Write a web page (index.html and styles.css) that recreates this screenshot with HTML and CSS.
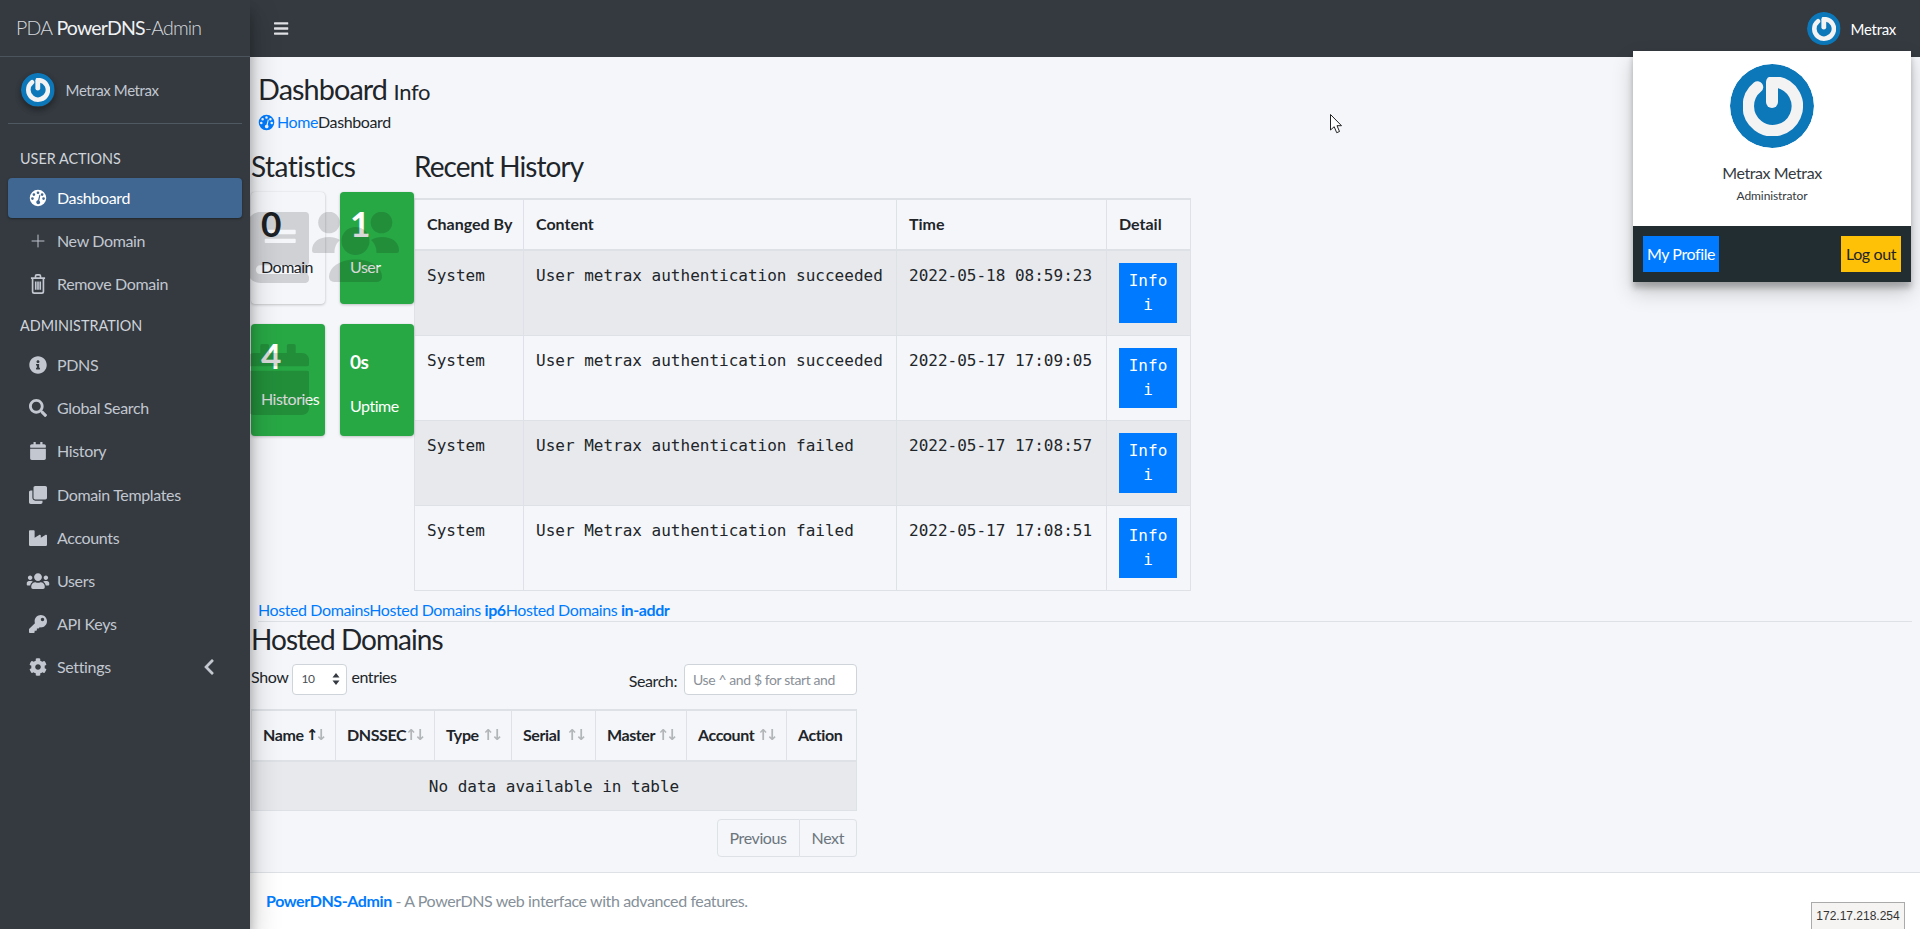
FILE: index.html
```html
<!DOCTYPE html>
<html lang="en">
<head>
<meta charset="utf-8">
<title>Dashboard - PowerDNS-Admin</title>
<link rel="stylesheet" href="styles.css">
</head>
<body>
<svg class="sprite" aria-hidden="true">
  <defs>
    <filter id="soft" x="-10%" y="-10%" width="120%" height="120%"><feGaussianBlur stdDeviation="0.6"/></filter>
    <symbol id="avatar" viewBox="0 0 84 84">
      <circle cx="42" cy="42" r="42" fill="#0c77b9"/>
      <g filter="url(#soft)" fill="none" stroke="#f3f3f4" stroke-linecap="round">
        <path d="M27.500 23A24.500 24.500 0 1 0 47 18" stroke-width="11.500"/>
        <path d="M42 18V38" stroke-width="12"/>
      </g>
    </symbol>
    <symbol id="gauge" viewBox="0 0 24 24">
      <path fill-rule="evenodd" d="M12 1a11 11 0 1 1 0 22a11 11 0 0 1 0-22zM12 3.200a1.800 1.800 0 1 0 0 3.600a1.800 1.800 0 0 0 0-3.600zM6.500 5.600a1.800 1.800 0 1 0 0 3.600a1.800 1.800 0 0 0 0-3.600zM17.500 5.600a1.800 1.800 0 1 0 0 3.600a1.800 1.800 0 0 0 0-3.600zM4.600 11a1.800 1.800 0 1 0 0 3.600a1.800 1.800 0 0 0 0-3.600zM19.400 11a1.800 1.800 0 1 0 0 3.600a1.800 1.800 0 0 0 0-3.600zM13.900 7.600L12 15.100a2.600 2.600 0 1 0 1.700.4L15.200 8z"/>
    </symbol>
    <symbol id="trash" viewBox="0 0 20 24">
      <path fill="none" stroke="currentColor" stroke-width="2" d="M1.500 5h17M3.500 5v16a2 2 0 0 0 2 2h9a2 2 0 0 0 2-2V5M7 5V2.500a1.500 1.500 0 0 1 1.500-1.500h3A1.500 1.500 0 0 1 13 2.500V5M7.300 9v10M10 9v10M12.700 9v10"/>
    </symbol>
    <symbol id="plus" viewBox="0 0 24 24"><path fill="none" stroke="currentColor" stroke-width="1.300" d="M12 3.500v17M3.500 12h17"/></symbol>
    <symbol id="info" viewBox="0 0 512 512"><path d="M256 8C119.043 8 8 119.083 8 256c0 136.997 111.043 248 248 248s248-111.003 248-248C504 119.083 392.957 8 256 8zm0 110c23.196 0 42 18.804 42 42s-18.804 42-42 42-42-18.804-42-42 18.804-42 42-42zm56 254c0 6.627-5.373 12-12 12h-88c-6.627 0-12-5.373-12-12v-24c0-6.627 5.373-12 12-12h12v-64h-12c-6.627 0-12-5.373-12-12v-24c0-6.627 5.373-12 12-12h64c6.627 0 12 5.373 12 12v100h12c6.627 0 12 5.373 12 12v24z"/></symbol>
    <symbol id="search" viewBox="0 0 512 512"><path d="M505 442.700L405.300 343c-4.500-4.500-10.600-7-17-7H372c27.600-35.300 44-79.700 44-128C416 93.100 322.900 0 208 0S0 93.100 0 208s93.100 208 208 208c48.300 0 92.700-16.400 128-44v16.300c0 6.400 2.500 12.500 7 17l99.700 99.700c9.400 9.400 24.600 9.400 33.900 0l28.300-28.300c9.400-9.400 9.400-24.600.1-34zM208 336c-70.700 0-128-57.200-128-128 0-70.700 57.200-128 128-128 70.700 0 128 57.200 128 128 0 70.700-57.200 128-128 128z"/></symbol>
    <symbol id="calendar" viewBox="0 0 448 512"><path d="M12 192h424c6.600 0 12 5.400 12 12v260c0 26.500-21.500 48-48 48H48c-26.500 0-48-21.500-48-48V204c0-6.600 5.400-12 12-12zm436-44v-36c0-26.500-21.500-48-48-48h-48V12c0-6.600-5.400-12-12-12h-40c-6.600 0-12 5.400-12 12v52H160V12c0-6.600-5.400-12-12-12h-40c-6.600 0-12 5.400-12 12v52H48C21.500 64 0 85.500 0 112v36c0 6.600 5.400 12 12 12h424c6.600 0 12-5.400 12-12z"/></symbol>
    <symbol id="clone" viewBox="0 0 512 512"><path d="M464 0c26.510 0 48 21.490 48 48v288c0 26.510-21.490 48-48 48H176c-26.510 0-48-21.490-48-48V48c0-26.510 21.490-48 48-48h288M176 416c-44.112 0-80-35.888-80-80V128H48c-26.510 0-48 21.490-48 48v288c0 26.510 21.490 48 48 48h288c26.510 0 48-21.490 48-48v-48H176z"/></symbol>
    <symbol id="industry" viewBox="0 0 512 512"><path d="M475.115 163.781L336 252.309v-68.280c0-18.916-20.931-30.399-36.885-20.248L160 252.309V56c0-13.255-10.745-24-24-24H24C10.745 32 0 42.745 0 56v400c0 13.255 10.745 24 24 24h464c13.255 0 24-10.745 24-24V184.029c0-18.917-20.931-30.399-36.885-20.248z"/></symbol>
    <symbol id="users" viewBox="0 0 640 512"><path d="M96 224c35.300 0 64-28.700 64-64s-28.700-64-64-64-64 28.700-64 64 28.700 64 64 64zm448 0c35.300 0 64-28.700 64-64s-28.700-64-64-64-64 28.700-64 64 28.700 64 64 64zm32 32h-64c-17.600 0-33.500 7.100-45.100 18.600 40.300 22.100 68.900 62 75.100 109.400h66c17.700 0 32-14.300 32-32v-32c0-35.300-28.700-64-64-64zm-256 0c61.900 0 112-50.100 112-112S381.900 32 320 32 208 82.100 208 144s50.100 112 112 112zm76.800 32h-8.300c-20.800 10-43.900 16-68.500 16s-47.600-6-68.500-16h-8.300C179.600 288 128 339.600 128 403.200V432c0 26.500 21.500 48 48 48h288c26.500 0 48-21.500 48-48v-28.800c0-63.600-51.600-115.200-115.200-115.200zm-223.700-13.400C161.500 263.100 145.600 256 128 256H64c-35.300 0-64 28.700-64 64v32c0 17.700 14.300 32 32 32h65.900c6.300-47.400 34.900-87.300 75.200-109.400z"/></symbol>
    <symbol id="key" viewBox="0 0 512 512"><path d="M512 176.001C512 273.203 433.202 352 336 352c-11.220 0-22.190-1.062-32.827-3.069l-24.012 27.014A23.999 23.999 0 0 1 261.223 384H224v40c0 13.255-10.745 24-24 24h-40v40c0 13.255-10.745 24-24 24H24c-13.255 0-24-10.745-24-24v-78.059c0-6.365 2.529-12.470 7.029-16.971l161.802-161.802C163.108 213.814 160 195.271 160 176 160 78.798 238.797.001 335.999 0 433.488-.001 512 78.511 512 176.001zM336 128c0 26.510 21.490 48 48 48s48-21.490 48-48-21.490-48-48-48-48 21.490-48 48z"/></symbol>
    <symbol id="cog" viewBox="0 0 512 512"><path d="M487.400 315.700l-42.600-24.600c4.300-23.200 4.300-47 0-70.200l42.600-24.600c4.900-2.800 7.100-8.600 5.500-14-11.100-35.600-30-67.800-54.700-94.600-3.800-4.100-10-5.100-14.800-2.300L380.800 110c-17.900-15.400-38.500-27.300-60.800-35.100V25.800c0-5.600-3.900-10.500-9.400-11.700-36.700-8.200-74.300-7.800-109.200 0-5.500 1.200-9.400 6.100-9.400 11.700V75c-22.200 7.900-42.800 19.800-60.800 35.100L88.700 85.500c-4.900-2.800-11-1.900-14.800 2.300-24.700 26.700-43.600 58.900-54.700 94.600-1.700 5.400.6 11.200 5.500 14L67.300 221c-4.300 23.200-4.300 47 0 70.200l-42.600 24.600c-4.900 2.800-7.100 8.600-5.500 14 11.100 35.600 30 67.800 54.700 94.600 3.800 4.100 10 5.100 14.800 2.300l42.600-24.600c17.900 15.400 38.500 27.300 60.800 35.100v49.200c0 5.600 3.900 10.500 9.400 11.700 36.700 8.200 74.300 7.800 109.200 0 5.500-1.200 9.400-6.100 9.400-11.700v-49.200c22.200-7.900 42.800-19.800 60.800-35.100l42.600 24.600c4.900 2.800 11 1.900 14.800-2.300 24.700-26.700 43.600-58.900 54.700-94.600 1.500-5.500-.7-11.300-5.600-14.100zM256 336c-44.100 0-80-35.900-80-80s35.900-80 80-80 80 35.900 80 80-35.900 80-80 80z"/></symbol>
    <symbol id="chevron" viewBox="0 0 320 512"><path d="M34.520 239.030L228.870 44.690c9.370-9.370 24.570-9.370 33.940 0l22.670 22.670c9.360 9.360 9.370 24.520.04 33.900L131.490 256l154.020 154.750c9.340 9.380 9.320 24.540-.04 33.900l-22.670 22.670c-9.370 9.370-24.570 9.370-33.940 0L34.520 272.970c-9.370-9.370-9.370-24.570 0-33.940z"/></symbol>
    <symbol id="bars" viewBox="0 0 448 512"><path d="M16 132h416c8.837 0 16-7.163 16-16V76c0-8.837-7.163-16-16-16H16C7.163 60 0 67.163 0 76v40c0 8.837 7.163 16 16 16zm0 160h416c8.837 0 16-7.163 16-16v-40c0-8.837-7.163-16-16-16H16c-8.837 0-16 7.163-16 16v40c0 8.837 7.163 16 16 16zm0 160h416c8.837 0 16-7.163 16-16v-40c0-8.837-7.163-16-16-16H16c-8.837 0-16 7.163-16 16v40c0 8.837 7.163 16 16 16z"/></symbol>
    <symbol id="book" viewBox="0 0 448 512"><path d="M448 360V24c0-13.300-10.700-24-24-24H96C43 0 0 43 0 96v320c0 53 43 96 96 96h328c13.300 0 24-10.700 24-24v-16c0-7.500-3.500-14.300-8.900-18.700-4.200-15.400-4.200-59.300 0-74.700 5.400-4.300 8.900-11.100 8.900-18.600zM128 134c0-3.300 2.700-6 6-6h212c3.300 0 6 2.700 6 6v20c0 3.300-2.700 6-6 6H134c-3.300 0-6-2.700-6-6v-20zm0 64c0-3.300 2.700-6 6-6h212c3.300 0 6 2.700 6 6v20c0 3.300-2.700 6-6 6H134c-3.300 0-6-2.700-6-6v-20zm253.400 250H96c-17.700 0-32-14.300-32-32 0-17.600 14.400-32 32-32h285.400c-1.900 17.100-1.900 46.900 0 64z"/></symbol>
    <symbol id="group" viewBox="0 0 87 70">
      <circle cx="17" cy="10.500" r="10.800"/><circle cx="69.500" cy="10.500" r="10.800"/><circle cx="43.500" cy="29" r="14"/>
      <path d="M0 38.500C0 30 7 25 17 25c4 0 8 1 11 3-3.500 3-5.500 7-5.500 13H2.500A2.500 2.500 0 0 1 0 38.500z"/>
      <path d="M87 38.500C87 30 80 25 70 25c-4 0-8 1-11 3 3.500 3 5.500 7 5.500 13h20A2.500 2.500 0 0 0 87 38.500z"/>
      <path d="M17 65C17 55 28 47.500 43.500 47.500S70 55 70 65a5 5 0 0 1-5 5H22a5 5 0 0 1-5-5z"/>
    </symbol>
  </defs>
</svg>

<aside class="sidebar">
  <div class="brand"><span class="brand-light">PDA</span> <span class="brand-main">PowerDNS</span><span class="brand-light">-Admin</span></div>
  <div class="user-panel">
    <svg class="avatar-sm shadowed"><use href="#avatar"/></svg>
    <span class="user-panel-name">Metrax Metrax</span>
  </div>
  <nav class="nav">
    <div class="nav-header">USER ACTIONS</div>
    <a class="nav-link active"><svg class="ic"><use href="#gauge"/></svg><span>Dashboard</span></a>
    <a class="nav-link"><svg class="ic"><use href="#plus"/></svg><span>New Domain</span></a>
    <a class="nav-link"><svg class="ic ic-tall"><use href="#trash"/></svg><span>Remove Domain</span></a>
    <div class="nav-header">ADMINISTRATION</div>
    <a class="nav-link"><svg class="ic"><use href="#info"/></svg><span>PDNS</span></a>
    <a class="nav-link"><svg class="ic"><use href="#search"/></svg><span>Global Search</span></a>
    <a class="nav-link"><svg class="ic"><use href="#calendar"/></svg><span>History</span></a>
    <a class="nav-link"><svg class="ic"><use href="#clone"/></svg><span>Domain Templates</span></a>
    <a class="nav-link"><svg class="ic"><use href="#industry"/></svg><span>Accounts</span></a>
    <a class="nav-link"><svg class="ic"><use href="#users"/></svg><span>Users</span></a>
    <a class="nav-link"><svg class="ic"><use href="#key"/></svg><span>API Keys</span></a>
    <a class="nav-link nav-link-more"><svg class="ic"><use href="#cog"/></svg><span>Settings</span><svg class="chev"><use href="#chevron"/></svg></a>
  </nav>
</aside>

<div class="main">
  <header class="navbar">
    <svg class="bars"><use href="#bars"/></svg>
    <div class="navbar-user">
      <svg class="avatar-sm"><use href="#avatar"/></svg>
      <span>Metrax</span>
    </div>
  </header>

  <main class="content">
    <div class="page-header">
      <h1 class="page-title">Dashboard <small>Info</small></h1>
      <div class="breadcrumb"><svg class="crumb-ic"><use href="#gauge"/></svg><a>Home</a><span>Dashboard</span></div>
    </div>

    <div class="top-row">
      <section class="stats">
        <h3 class="section-title stats-title">Statistics</h3>
        <div class="stat-grid">
          <div class="stat stat-light">
            <div class="stat-num">0</div><p class="stat-label">Domain</p>
            <svg class="stat-ic stat-ic-book"><use href="#book"/></svg>
          </div>
          <div class="stat stat-green">
            <div class="stat-num">1</div><p class="stat-label">User</p>
            <svg class="stat-ic stat-ic-group"><use href="#group"/></svg>
          </div>
          <div class="stat stat-green">
            <div class="stat-num">4</div><p class="stat-label">Histories</p>
            <svg class="stat-ic stat-ic-book"><use href="#calendar"/></svg>
          </div>
          <div class="stat stat-green">
            <div class="stat-num"><span class="stat-small">0s</span></div><p class="stat-label">Uptime</p>
          </div>
        </div>
      </section>
      <section class="history">
        <h3 class="section-title history-title">Recent History</h3>
        <table class="table history-table">
          <colgroup><col class="h1"><col class="h2"><col class="h3"><col class="h4"></colgroup>
          <thead><tr><th>Changed By</th><th>Content</th><th>Time</th><th>Detail</th></tr></thead>
          <tbody>
            <tr><td>System</td><td>User metrax authentication succeeded</td><td>2022-05-18 08:59:23</td><td><a class="info-btn">Info i</a></td></tr>
            <tr><td>System</td><td>User metrax authentication succeeded</td><td>2022-05-17 17:09:05</td><td><a class="info-btn">Info i</a></td></tr>
            <tr><td>System</td><td>User Metrax authentication failed</td><td>2022-05-17 17:08:57</td><td><a class="info-btn">Info i</a></td></tr>
            <tr><td>System</td><td>User Metrax authentication failed</td><td>2022-05-17 17:08:51</td><td><a class="info-btn">Info i</a></td></tr>
          </tbody>
        </table>
      </section>
    </div>

    <div class="tabs"><a>Hosted Domains</a><a>Hosted Domains <b>ip6</b></a><a>Hosted Domains <b>in-addr</b></a></div>

    <section class="domains">
      <h3 class="section-title domains-title">Hosted Domains</h3>
      <div class="dt-controls">
        <div class="dt-length">Show <span class="fake-select"><span>10</span><svg class="updown" viewBox="0 0 8 14"><path d="M4 1L7.500 5.500H.5zM4 13L.5 8.500H7.500z"/></svg></span> entries</div>
        <div class="dt-search">Search: <span class="fake-input">Use ^ and $ for start and</span></div>
      </div>
      <table class="table domains-table">
        <colgroup><col class="d1"><col class="d2"><col class="d3"><col class="d4"><col class="d5"><col class="d6"><col class="d7"></colgroup>
        <thead><tr><th class="sort sort-asc">Name</th><th class="sort">DNSSEC</th><th class="sort">Type</th><th class="sort">Serial</th><th class="sort">Master</th><th class="sort">Account</th><th>Action</th></tr></thead>
        <tbody><tr><td colspan="7" class="empty">No data available in table</td></tr></tbody>
      </table>
      <div class="pager"><a>Previous</a><a>Next</a></div>
    </section>
  </main>

  <footer class="footer"><a>PowerDNS-Admin</a> - A PowerDNS web interface with advanced features.</footer>
</div>

<div class="user-menu">
  <div class="user-menu-top">
    <svg class="avatar-lg"><use href="#avatar"/></svg>
    <div class="user-menu-name">Metrax Metrax</div>
    <div class="user-menu-role">Administrator</div>
  </div>
  <div class="user-menu-foot"><a class="btn-profile">My Profile</a><a class="btn-logout">Log out</a></div>
</div>

<svg class="cursor" viewBox="0 0 13 20"><path d="M.5.5V16l3.700-3.300 2.500 6 2.800-1.200-2.500-5.800H11.500z" fill="#fff" stroke="#222" stroke-width="1"/></svg>
<div class="ip-tag">172.17.218.254</div>
</body>
</html>
```
FILE: styles.css
```css
* { box-sizing: border-box; }
html, body { height: 100%; }
body {
  margin: 0;
  display: flex;
  overflow: hidden;
  background: #f4f6f9;
  color: #212529;
  font: 16px/24px Lato, "Noto Sans", sans-serif;
  letter-spacing: -.4px;
}
a { color: #007bff; text-decoration: none; }
h1, h3, p { margin: 0; font-weight: 400; }
.sprite { width: 0; height: 0; display: block; }

/* Sidebar */
.sidebar {
  flex: 0 0 250px;
  background: #343a40;
  color: #c2c7d0;
  z-index: 5;
  box-shadow: 0 14px 28px rgba(0,0,0,.25), 0 10px 10px rgba(0,0,0,.22);
}
.brand {
  height: 57px;
  padding: 13px 0 0 16px;
  font-size: 19.5px;
  letter-spacing: -.8px;
  line-height: 30px;
  border-bottom: 1px solid #4b545c;
  color: #d5d8dc;
}
.brand-light { font-weight: 300; }
.brand-main { font-weight: 400; color: #f0f1f3; }
.user-panel {
  height: 67px;
  margin: 0 8px;
  padding: 16px 0 0 13px;
  display: flex;
  gap: 11px;
  border-bottom: 1px solid #4f5962;
}
.avatar-sm { width: 33.6px; height: 33.6px; flex: none; border-radius: 50%; }
.shadowed { box-shadow: 0 3px 6px rgba(0,0,0,.16), 0 3px 6px rgba(0,0,0,.23); }
.user-panel-name { line-height: 34px; font-size: 15px; letter-spacing: -.4px; }
.nav { padding: 16.5px 8px 0; }
.nav-header { height: 35.5px; padding: 6px 0 0 12px; line-height: 24px; margin-bottom: 2px; font-size: 14.4px; letter-spacing: 0; color: #d0d4db; }
.nav-link {
  height: 40px;
  margin-bottom: 3.2px;
  padding-left: 17.5px;
  display: flex;
  align-items: center;
  gap: 7.5px;
  color: #c2c7d0;
  letter-spacing: -.35px;
  border-radius: 4px;
}
.nav-link.active { background: #3f6791; color: #fff; box-shadow: 0 1px 3px rgba(0,0,0,.12), 0 1px 2px rgba(0,0,0,.24); }
.ic { width: 24px; height: 18px; flex: none; fill: currentColor; }
.ic-tall { height: 20px; }
.nav-link-more { position: relative; }
.chev { position: absolute; left: 195px; top: 11px; width: 12px; height: 18px; fill: #c2c7d0; }

/* Main column */
.main { flex: 1; min-width: 0; display: flex; flex-direction: column; }
.navbar {
  flex: 0 0 57px;
  background: #343a40;
  display: flex;
  align-items: center;
  justify-content: space-between;
  padding: 0 24px;
  color: #fff;
}
.bars { width: 14.5px; height: 17px; fill: #dfe1e4; }
.navbar-user { display: flex; align-items: center; gap: 10px; font-size: 15px; letter-spacing: -.3px; }
.content { flex: 1; min-height: 0; }
.page-header { padding: 15px 0 0 8px; }
.page-title { font-size: 28.8px; line-height: 35px; height: 35px; letter-spacing: -.9px; }
.page-title small { font-size: 22px; letter-spacing: -.3px; }
.breadcrumb { margin-top: 3px; display: flex; align-items: center; }
.crumb-ic { width: 17px; height: 17px; margin-right: 2px; fill: #007bff; }
.top-row { display: flex; margin-top: 16px; }
.section-title { font-size: 28px; line-height: 33.6px; letter-spacing: -.95px; }
.stats { flex: 0 0 164px; padding-left: 1px; }
.stats-title { margin-bottom: 8.4px; letter-spacing: -.5px; }
.stat-grid { display: grid; grid-template-columns: 74px 74px; gap: 20px 15px; }
.stat {
  position: relative;
  height: 112px;
  padding: 10px;
  border-radius: 4px;
  box-shadow: 0 0 1px rgba(0,0,0,.125), 0 1px 3px rgba(0,0,0,.2);
}
.stat-light { background: #f4f6f9; }
.stat-green { background: #28a745; color: #fff; }
.stat-num { font-size: 35.2px; font-weight: 700; line-height: 42px; }
.stat-small { font-size: 19px; }
.stat-label { margin-top: 11px; white-space: nowrap; letter-spacing: -.5px; }
.stat-ic { position: absolute; fill: rgba(0,0,0,.15); }
.stat-ic-book { top: 20px; right: 16px; width: 62px; height: 71px; }
.stat-ic-group { top: 20px; right: 15px; width: 87px; height: 70px; }

/* Tables */
.table { border-collapse: collapse; table-layout: fixed; }
.table th, .table td { border: 1px solid #dee2e6; padding: 13px 12px 11px; text-align: left; vertical-align: top; }
.table th { padding: 12px 12px 13px; font-weight: 700; letter-spacing: 0; white-space: nowrap; border-top-width: 2px; border-bottom-width: 2px; }
.table td { font-family: "DejaVu Sans Mono", "Liberation Mono", monospace; font-size: 16px; letter-spacing: 0; }
.table tbody tr:nth-child(odd) { background: rgba(0,0,0,.05); }
.history-title { margin-bottom: 14.4px; }
.history-table { width: 776px; }
.h1 { width: 109px; } .h2 { width: 373px; } .h3 { width: 210px; } .h4 { width: 84px; }
.info-btn { display: block; width: 58px; height: 60px; margin: -1px 0 1px; padding: 6px 5px; background: #007bff; color: #fff; text-align: center; }
.tabs { margin: 7px 8px 0 8px; height: 24px; border-bottom: 1px solid #dee2e6; white-space: nowrap; }
.domains { padding-left: 1px; }
.domains-title { line-height: 34px; }
.dt-controls { width: 606px; height: 31px; margin-top: 8px; display: flex; justify-content: space-between; }
.dt-length { display: flex; align-items: flex-start; gap: 4px; line-height: 26px; }
.dt-search { display: flex; gap: 7px; line-height: 33px; }
.fake-select, .fake-input {
  display: flex;
  align-items: center;
  height: 31px;
  background: #fff;
  border: 1px solid #ced4da;
  border-radius: 4px;
  font-size: 12px;
  color: #495057;
}
.fake-select { width: 55px; padding: 0 6px 0 8px; justify-content: space-between; }
.updown { width: 8px; height: 14px; fill: #343a40; }
.fake-input { width: 173px; padding-left: 8px; font-size: 14px; color: #8a9097; white-space: nowrap; overflow: hidden; }
.domains-table { width: 605px; margin-top: 14px; }
.d1 { width: 84px; } .d2 { width: 99px; } .d3 { width: 77px; } .d4 { width: 84px; } .d5 { width: 91px; } .d6 { width: 100px; } .d7 { width: 70px; }
.domains-table th { padding-left: 11px; padding-right: 0; letter-spacing: -.4px; }
.sort { position: relative; }
.sort::before, .sort::after { position: absolute; top: 12px; font-weight: 700; opacity: .3; font-family: "DejaVu Sans", sans-serif; font-size: 15px; }
.sort::before { content: "\2191"; right: 16.8px; }
.sort::after { content: "\2193"; right: 7.8px; }
.sort-asc::before { opacity: 1; }
.empty { text-align: center !important; }
.pager { width: 606px; margin-top: 8px; display: flex; justify-content: flex-end; }
.pager a { height: 38px; line-height: 36px; padding: 0 12px; color: #6c757d; border: 1px solid #dee2e6; }
.pager a:first-child { border-radius: 4px 0 0 4px; }
.pager a:last-child { border-left: 0; border-radius: 0 4px 4px 0; }

/* Footer */
.footer { flex: 0 0 57px; padding: 16px 16px 0; background: #fff; border-top: 1px solid #dee2e6; color: #869099; }
.footer a { font-weight: 700; }

/* Overlays */
.user-menu {
  position: absolute;
  left: 1633px;
  top: 51px;
  width: 278px;
  z-index: 10;
  box-shadow: 0 10px 20px rgba(0,0,0,.19), 0 6px 6px rgba(0,0,0,.23);
}
.user-menu-top { height: 175px; padding-top: 13px; background: #fff; text-align: center; display: flex; flex-direction: column; align-items: center; }
.avatar-lg { width: 84px; height: 84px; border-radius: 50%; }
.user-menu-name { margin-top: 13px; color: #343a40; }
.user-menu-role { font-size: 12px; line-height: 18px; margin-top: 2px; color: #343a40; letter-spacing: -.1px; }
.user-menu-foot { height: 56px; padding: 10px; background: #222d32; display: flex; justify-content: space-between; }
.btn-profile, .btn-logout { height: 36px; line-height: 36px; white-space: nowrap; text-align: center; }
.btn-profile { width: 76px; background: #007bff; color: #fff; }
.btn-logout { width: 60px; background: #ffc107; color: #212529; }
.cursor { position: absolute; left: 1330px; top: 114px; width: 13px; height: 20px; z-index: 12; }
.ip-tag {
  position: absolute;
  left: 1811px;
  top: 902px;
  width: 94px;
  height: 28px;
  z-index: 12;
  border: 1px solid #aaa;
  background: #f5f4f2;
  font: 12px/26px "Liberation Sans", Arial, sans-serif;
  letter-spacing: 0;
  text-align: center;
  color: #333;
}
```
